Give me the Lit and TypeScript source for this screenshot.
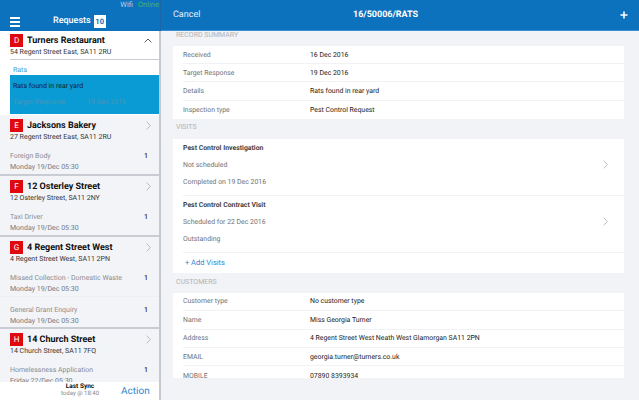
import { LitElement, html, css } from 'lit'
import { customElement } from 'lit/decorators.js'

type Job = { name: string; count: number; when: string }
type Place = { letter: string; name: string; address: string; jobs: Job[] }

const places: Place[] = [
  { letter: 'E', name: 'Jacksons Bakery', address: '27 Regent Street East, SA11 2RU',
    jobs: [{ name: 'Foreign Body', count: 1, when: 'Monday 19/Dec 05:30' }] },
  { letter: 'F', name: '12 Osterley Street', address: '12 Osterley Street, SA11 2NY',
    jobs: [{ name: 'Taxi Driver', count: 1, when: 'Monday 19/Dec 05:30' }] },
  { letter: 'G', name: '4 Regent Street West', address: '4 Regent Street West, SA11 2PN',
    jobs: [
      { name: 'Missed Collection - Domestic Waste', count: 1, when: 'Monday 19/Dec 05:30' },
      { name: 'General Grant Enquiry', count: 1, when: 'Monday 19/Dec 05:30' },
    ] },
  { letter: 'H', name: '14 Church Street', address: '14 Church Street, SA11 7FQ',
    jobs: [{ name: 'Homelessness Application', count: 1, when: 'Friday 22/Dec 05:30' }] },
]

const summary = [
  ['Received', '16 Dec 2016'],
  ['Target Response', '19 Dec 2016'],
  ['Details', 'Rats found in rear yard'],
  ['Inspection type', 'Pest Control Request'],
]

const customers = [
  ['Customer type', 'No customer type'],
  ['Name', 'Miss Georgia Turner'],
  ['Address', '4 Regent Street West Neath West Glamorgan SA11 2PN'],
  ['EMAIL', 'georgia.turner@turners.co.uk'],
  ['MOBILE', '07890 8393934'],
]

const visits = [
  { title: 'Pest Control Investigation', lines: ['Not scheduled', 'Completed on 19 Dec 2016'] },
  { title: 'Pest Control Contract Visit', lines: ['Scheduled for 22 Dec 2016', 'Outstanding'] },
]

const chevron = () => html`<svg class="more" viewBox="0 0 5 9" width="5" height="9"><path d="M.6.6l3.8 3.9L.6 8.4" fill="none" stroke="currentColor" stroke-width="0.8"/></svg>`

@customElement('app-root')
export class AppRoot extends LitElement {
  static styles = css`
    :host {
      display: flex;
      width: 639px;
      height: 400px;
      overflow: hidden;
      background: #f1f3f7;
      font-family: Roboto, "Liberation Sans", sans-serif;
      font-size: 7px;
      color: #222;
      text-rendering: geometricPrecision;
    }
    .side {
      width: 161px;
      flex: none;
      display: flex;
      flex-direction: column;
      background: #f3f4f8;
    }
    .side-head {
      height: 31px;
      flex: none;
      box-sizing: border-box;
      background: #0d72be;
      border-right: 1px solid #1a66a6;
      color: #fff;
      display: flex;
      flex-direction: column;
    }
    .status {
      height: 10px;
      display: flex;
      justify-content: flex-end;
      gap: 5px;
      padding-right: 1px;
      font-size: 7.5px;
      line-height: 10px;
    }
    .status .wifi { color: #b5d4ea; }
    .status .online { color: #3fb950; }
    .bar {
      display: flex;
      align-items: center;
      padding: 1px 0 0 10px;
      height: 20px;
    }
    .burger { width: 10px; height: 10px; margin-top: 2px; display: flex; flex-direction: column; justify-content: space-between; }
    .burger i { display: block; height: 2px; background: #fff; }
    .bar .label { margin-left: 33px; font-size: 9px; font-weight: 500; }
    .count {
      margin-left: 3px;
      width: 12px;
      height: 13px;
      background: #fff;
      color: #0d72be;
      font-size: 7.5px;
      font-weight: 700;
      line-height: 13px;
      text-align: center;
    }
    .list { flex: 1; overflow: hidden; min-height: 0; border-right: 2px solid #c4c8cf; }
    .place { border-bottom: 2px solid #c9ccd2; }
    .place.open { background: #fff; border-bottom: none; padding-bottom: 1px; }
    .place-head { padding: 4px 0 0 10px; }
    .place.open .place-head { padding-top: 3px; }
    .title-row { display: flex; align-items: center; height: 13px; }
    .letter {
      width: 13px;
      height: 13px;
      background: #e0090f;
      color: #fff;
      font-size: 8px;
      line-height: 13px;
      text-align: center;
      flex: none;
    }
    .name { margin-left: 4px; font-size: 9px; font-weight: 700; color: #111; flex: 1; }
    .more { color: #a9adb3; margin-right: 8px; flex: none; }
    .less { color: #444; margin-right: 7px; flex: none; }
    .addr { font-size: 7px; line-height: 11px; color: #333; }
    .rule { height: 1px; margin: 1px 0 0 10px; background: #c9ccd2; }
    .rats-tab { margin-left: 13px; font-size: 7px; color: #3f9ad8; padding-top: 6px; height: 9px; line-height: 9px; }
    .rats {
      margin: 0 0 0 10px;
      height: 39px;
      background: #0a9bd4;
      box-sizing: border-box;
      padding: 7px 0 0 3px;
      color: #123;
      font-size: 7px;
      line-height: 9px;
    }
    .rats .faded { display: flex; margin-top: 7px; color: #4f93b5; }
    .rats .faded span:first-child { width: 74px; }
    .job {
      padding: 8px 10px 2px 10px;
      color: #8a8d93;
      font-size: 7px;
      height: 31px;
      box-sizing: border-box;
    }
    .job + .job { border-top: 1px solid #eceef2; }
    .job-top { display: flex; justify-content: space-between; line-height: 10px; }
    .job-top b { font-weight: 500; color: #333; margin-right: 1px; }
    .job-when { line-height: 10px; margin-top: 1px; color: #75787e; }
    .side-foot {
      height: 18px;
      flex: none;
      background: #fff;
      border-right: 2px solid #c4c8cf;
      display: flex;
      align-items: center;
      white-space: nowrap;
    }
    .sync { margin: 0 0 3px 60px; width: 40px; text-align: center; line-height: 7px; }
    .sync b { display: block; font-size: 6.5px; font-weight: 700; color: #111; }
    .sync span { display: block; font-size: 6px; color: #888; }
    .action { margin-left: 21px; font-size: 10px; color: #2f86d0; }

    .main { flex: 1; min-width: 0; display: flex; flex-direction: column; }
    .main-head {
      height: 31px;
      flex: none;
      box-sizing: border-box;
      background: #0d72be;
      border-bottom: 1px solid #3b8fd0;
      color: #fff;
      display: grid;
      grid-template-columns: 180px auto 1fr;
      align-items: center;
      padding: 0 11px 0 12px;
    }
    .cancel { font-size: 9px; color: #e4f0f9; }
    .ref { font-size: 9px; font-weight: 700; }
    .plus { justify-self: end; }
    .body { padding: 0 15px 0 12px; font-size: 6.9px; }
    .sec {
      font-size: 7px;
      color: #b0b2b6;
      padding-left: 3px;
      height: 15px;
      line-height: 9px;
    }
    .sec.visits { height: 16px; }
    .sec.customers { padding-top: 5px; }
    .card { background: #fff; padding: 0 0 0 10px; }
    .kv {
      display: flex;
      height: 18.4px;
      align-items: center;
      box-sizing: border-box;
      border-bottom: 1px solid #f1f2f5;
    }
    .kv:last-child { border-bottom: none; }
    .kv .k { width: 127px; color: #6f7277; }
    .kv .v { color: #222; }
    .card.sum { margin-bottom: 4px; }
    .card.sum .kv { height: 18.2px; }
    .card.cust { height: 85px; overflow: hidden; }
    .visit {
      height: 57px;
      box-sizing: border-box;
      padding-top: 1px;
      border-bottom: 1px solid #f1f2f5;
      color: #6f7277;
      display: flex;
      align-items: flex-start;
    }
    .visit .lines { flex: 1; }
    .visit .lines div { height: 17.3px; line-height: 17.3px; }
    .visit .lines .t { font-weight: 700; color: #444; }
    .visit .more { margin: 20px 16px 0 0; }
    .add { height: 20px; line-height: 20px; color: #2f86d0; font-size: 7.5px; padding-left: 2px; }
  `

  renderPlace(p: Place) {
    return html`<div class="place">
      <div class="place-head">
        <div class="title-row">
          <div class="letter">${p.letter}</div>
          <div class="name">${p.name}</div>
          ${chevron()}
        </div>
        <div class="addr">${p.address}</div>
      </div>
      ${p.jobs.map(j => html`<div class="job">
        <div class="job-top"><span>${j.name}</span><b>${j.count}</b></div>
        <div class="job-when">${j.when}</div>
      </div>`)}
    </div>`
  }

  renderRow(r: string[]) {
    return html`<div class="kv"><div class="k">${r[0]}</div><div class="v">${r[1]}</div></div>`
  }

  render() {
    return html`
      <div class="side">
        <div class="side-head">
          <div class="status"><span class="wifi">Wifi</span><span class="online">Online</span></div>
          <div class="bar">
            <div class="burger"><i></i><i></i><i></i></div>
            <span class="label">Requests</span>
            <span class="count">10</span>
          </div>
        </div>
        <div class="list">
          <div class="place open">
            <div class="place-head">
              <div class="title-row">
                <div class="letter">D</div>
                <div class="name">Turners Restaurant</div>
                <svg class="less" viewBox="0 0 8 5" width="8" height="5"><path d="M.6 4.4L4 1l3.4 3.4" fill="none" stroke="currentColor" stroke-width="0.9"/></svg>
              </div>
              <div class="addr">54 Regent Street East, SA11 2RU</div>
            </div>
            <div class="rule"></div>
            <div class="rats-tab">Rats</div>
            <div class="rats">
              <div>Rats found in rear yard</div>
              <div class="faded"><span>Target Response</span><span>19 Dec 2016</span></div>
            </div>
          </div>
          ${places.map(p => this.renderPlace(p))}
        </div>
        <div class="side-foot">
          <div class="sync"><b>Last Sync</b><span>today @ 18:40</span></div>
          <span class="action">Action</span>
        </div>
      </div>
      <div class="main">
        <div class="main-head">
          <span class="cancel">Cancel</span>
          <span class="ref">16/50006/RATS</span>
          <svg class="plus" viewBox="0 0 8 8" width="8" height="8"><path d="M4 .5v7M.5 4h7" stroke="#fff" stroke-width="1.6"/></svg>
        </div>
        <div class="body">
          <div class="sec">RECORD SUMMARY</div>
          <div class="card sum">${summary.map(r => this.renderRow(r))}</div>
          <div class="sec visits">VISITS</div>
          <div class="card">
            ${visits.map(v => html`<div class="visit">
              <div class="lines">
                <div class="t">${v.title}</div>
                ${v.lines.map(l => html`<div>${l}</div>`)}
              </div>
              ${chevron()}
            </div>`)}
            <div class="add">+ Add Visits</div>
          </div>
          <div class="sec customers">CUSTOMERS</div>
          <div class="card cust">${customers.map(r => this.renderRow(r))}</div>
        </div>
      </div>
    `
  }
}
